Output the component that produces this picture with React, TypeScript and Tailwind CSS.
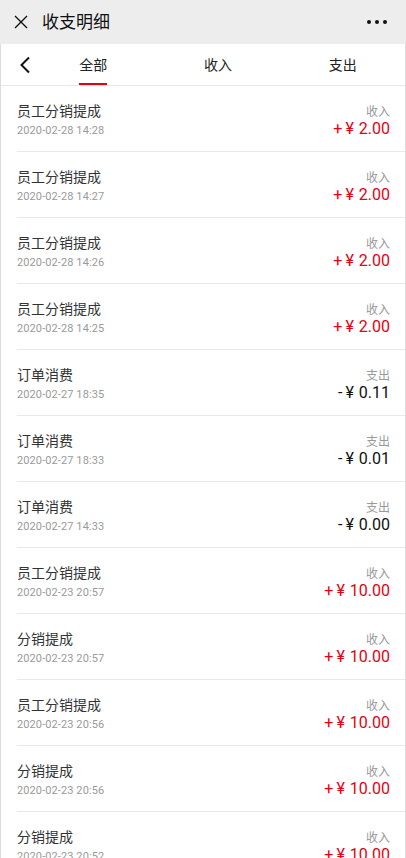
import { useState } from "react";

interface Record {
  title: string;
  time: string;
  type: "收入" | "支出";
  amount: string;
}

const records: Record[] = [
  { title: "员工分销提成", time: "2020-02-28 14:28", type: "收入", amount: "2.00" },
  { title: "员工分销提成", time: "2020-02-28 14:27", type: "收入", amount: "2.00" },
  { title: "员工分销提成", time: "2020-02-28 14:26", type: "收入", amount: "2.00" },
  { title: "员工分销提成", time: "2020-02-28 14:25", type: "收入", amount: "2.00" },
  { title: "订单消费", time: "2020-02-27 18:35", type: "支出", amount: "0.11" },
  { title: "订单消费", time: "2020-02-27 18:33", type: "支出", amount: "0.01" },
  { title: "订单消费", time: "2020-02-27 14:33", type: "支出", amount: "0.00" },
  { title: "员工分销提成", time: "2020-02-23 20:57", type: "收入", amount: "10.00" },
  { title: "分销提成", time: "2020-02-23 20:57", type: "收入", amount: "10.00" },
  { title: "员工分销提成", time: "2020-02-23 20:56", type: "收入", amount: "10.00" },
  { title: "分销提成", time: "2020-02-23 20:56", type: "收入", amount: "10.00" },
  { title: "分销提成", time: "2020-02-23 20:52", type: "收入", amount: "10.00" },
];

const tabs = ["全部", "收入", "支出"];

const App = () => {
  const [active, setActive] = useState(0);

  return (
    <div className="w-[406px] min-h-[858px] bg-white font-['Roboto','Noto_Sans_CJK_SC',sans-serif]">
      {/* wechat top bar */}
      <div className="flex items-center h-[44px] bg-[#ededed] px-[14px]">
        <svg width="14" height="14" viewBox="0 0 14 14" className="shrink-0">
          <path d="M1 1 L13 13 M13 1 L1 13" stroke="#111" strokeWidth="1.4" fill="none" />
        </svg>
        <span className="ml-[14px] text-[17px] text-[#111] leading-none">收支明细</span>
        <div className="ml-auto mr-[5px] flex gap-[4px]">
          <span className="w-[4px] h-[4px] rounded-full bg-[#111]" />
          <span className="w-[4px] h-[4px] rounded-full bg-[#111]" />
          <span className="w-[4px] h-[4px] rounded-full bg-[#111]" />
        </div>
      </div>

      <div className="border-x border-[#dcdcdc]">
        {/* tabs */}
        <div className="flex h-[42px] border-b border-[#e8e8e8]">
          <div className="w-[30px] flex items-center justify-end">
            <svg width="12" height="18" viewBox="0 0 12 18">
              <path d="M10 1.5 L2.5 9 L10 16.5" stroke="#111" strokeWidth="2" fill="none" strokeLinejoin="miter" />
            </svg>
          </div>
          {tabs.map((t, i) => (
            <button
              key={t}
              onClick={() => setActive(i)}
              className="flex-1 flex flex-col items-center justify-center relative"
            >
              <span className="text-[14px] text-[#222] leading-none">{t}</span>
              {active === i ? (
                <span className="absolute bottom-[0px] w-[28px] h-[2px] bg-[#e60012]" />
              ) : null}
            </button>
          ))}
        </div>

        {/* list */}
        <div className="pl-[16px]">
          {records.map((r, i) => (
            <div
              key={i}
              className="flex justify-between pr-[15px] pt-[15px] pb-[12px] border-b border-[#e8e8e8]"
            >
              <div className="flex flex-col">
                <span className="text-[14px] leading-[20px] text-[#333]">{r.title}</span>
                <span className="mt-[2px] text-[11px] leading-[16px] text-[#9a9a9a] tracking-[0.1px]">{r.time}</span>
              </div>
              <div className="flex flex-col items-end">
                <span className="mt-[3px] text-[12px] leading-[16px] text-[#999]">{r.type}</span>
                <span
                  className={
                    r.type === "收入"
                      ? "flex text-[16px] leading-[18px] text-[#e60012]"
                      : "flex text-[16px] leading-[18px] text-[#111]"
                  }
                >
                  <span className="mr-[3px]">{r.type === "收入" ? "+" : "-"}</span>
                  <span>¥</span>
                  <span className="ml-[5px]">{r.amount}</span>
                </span>
              </div>
            </div>
          ))}
        </div>
      </div>
    </div>
  );
};

export default App;
